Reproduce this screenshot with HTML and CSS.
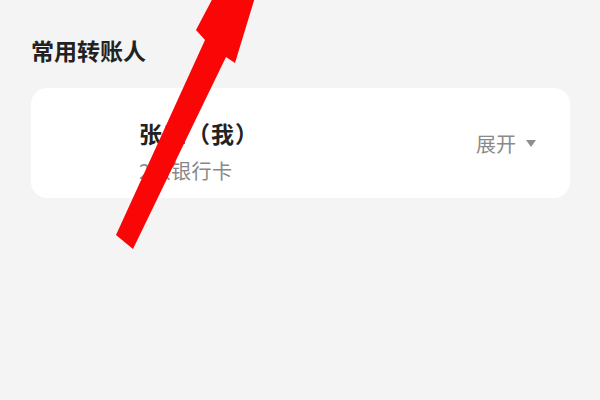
FILE: index.html
```html
<!DOCTYPE html>
<html lang="zh-CN">
<head>
<meta charset="utf-8">
<title>常用转账人</title>
<link rel="stylesheet" href="styles.css">
</head>
<body>
<main class="page">
  <h2 class="section-title">常用转账人</h2>
  <div class="card">
    <div class="person">
      <div class="name">张三（我）</div>
      <div class="sub">2张银行卡</div>
    </div>
    <div class="expand">展开 <span class="tri"></span></div>
  </div>
</main>
<svg class="arrow" width="600" height="400" viewBox="0 0 600 400">
  <polygon points="215,-6 256,-6 235,63 226,57 133,249 116,235 205,40 196,30" fill="#fb0606"/>
</svg>
</body>
</html>
```
FILE: styles.css
```css
html, body {
  margin: 0;
  padding: 0;
}
body {
  width: 600px;
  height: 400px;
  overflow: hidden;
  background: #f4f4f4;
  font-family: "Noto Sans CJK SC", "Noto Sans", sans-serif;
  position: relative;
}
.page {
  padding: 35px 30px 0 31px;
}
.section-title {
  margin: 0;
  font-size: 23px;
  line-height: 30px;
  font-weight: 700;
  color: #222;
}
.card {
  margin-top: 23px;
  height: 110px;
  box-sizing: border-box;
  background: #fff;
  border-radius: 16px;
  padding: 30px 34px 12px 108px;
  display: flex;
  justify-content: space-between;
  align-items: flex-start;
}
.name {
  font-size: 23px;
  line-height: 30px;
  font-weight: 700;
  letter-spacing: 1px;
  color: #222;
}
.sub {
  margin-top: 9px;
  font-size: 20px;
  line-height: 28px;
  letter-spacing: 0.5px;
  color: #888;
}
.expand {
  margin-top: 12px;
  font-size: 20px;
  line-height: 28px;
  color: #8a8a8a;
  display: flex;
  align-items: center;
  gap: 4px;
}
.tri {
  width: 0;
  height: 0;
  border-left: 5.5px solid transparent;
  border-right: 5.5px solid transparent;
  border-top: 7px solid #8e8e8e;
  margin-left: 6px;
  margin-top: -2px;
}
.arrow {
  position: absolute;
  left: 0;
  top: 0;
  pointer-events: none;
}
```
